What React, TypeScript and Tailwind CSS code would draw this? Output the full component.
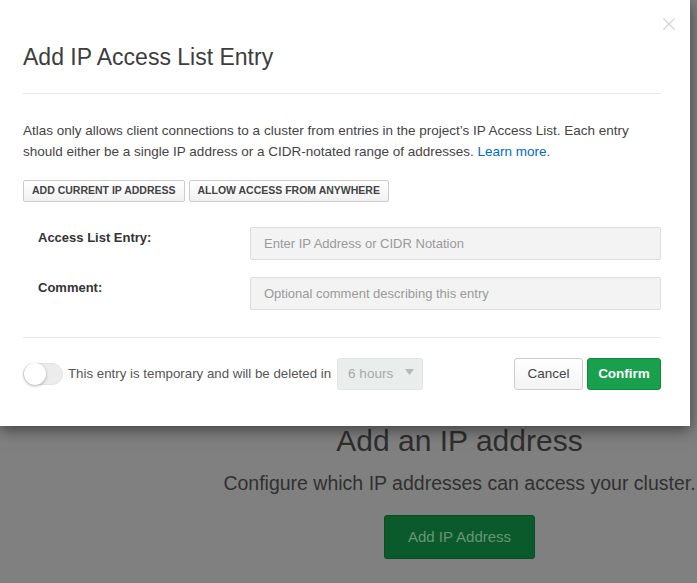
const font = { fontFamily: '"Liberation Sans", Arial, sans-serif' };

const Backdrop = () => (
  <div className="flex flex-col items-center w-[475px] ml-[222px] pt-[421px] text-center">
    <div className="text-[30px] font-light text-[#2e2e2e] leading-[40px] whitespace-nowrap">Add an IP address</div>
    <div className="mt-[10px] text-[19.5px] text-[#303030] leading-[24px] whitespace-nowrap">
      Configure which IP addresses can access your cluster.
    </div>
    <div className="mt-[20px] w-[151px] h-[44px] rounded-[3px] bg-[#0b5a2b] border border-[#0a4d25] flex items-center justify-center text-[15px] text-[#6a9479]">
      Add IP Address
    </div>
  </div>
);

export default function App() {
  return (
    <div className="relative w-[697px] h-[583px] overflow-hidden bg-[#808080]" style={font}>
      <Backdrop />

      {/* modal */}
      <div className="absolute left-0 top-0 w-[690px] h-[426px] bg-white shadow-[0_4px_14px_rgba(0,0,0,0.5)]">
        <svg width="12" height="12" viewBox="0 0 12 12" className="absolute left-[663px] top-[18px]">
          <path d="M0.5 0.5L11.5 11.5M11.5 0.5L0.5 11.5" stroke="#d4d4d4" strokeWidth="1.3" />
        </svg>

        <div className="px-[23px] w-[684px]">
          <h2 className="pt-[42px] pb-[21px] text-[23px] font-light text-[#3d3d3d] leading-[30px] border-b border-[#e8e8e8]">
            Add IP Access List Entry
          </h2>

          <p className="mt-[26px] text-[13.5px] leading-[21px] text-[#444]">
            Atlas only allows client connections to a cluster from entries in the project’s IP Access List. Each entry
            should either be a single IP address or a CIDR-notated range of addresses.{" "}
            <a className="text-[#006cbc]">Learn more.</a>
          </p>

          <div className="mt-[18px] flex gap-[4px]">
            <button className="h-[22px] px-[8px] text-[10.5px] font-bold text-[#444] uppercase border border-[#ccc] rounded-[2px] bg-gradient-to-b from-white to-[#f1f1f1]">
              Add current IP address
            </button>
            <button className="h-[22px] px-[8px] text-[10.5px] font-bold text-[#444] uppercase border border-[#ccc] rounded-[2px] bg-gradient-to-b from-white to-[#f1f1f1]">
              Allow access from anywhere
            </button>
          </div>

          <div className="mt-[25px] flex flex-col gap-[17px]">
            <div className="flex items-start">
              <label className="w-[227px] pl-[15px] pt-[1px] text-[13px] font-bold text-[#333]">Access List Entry:</label>
              <input
                placeholder="Enter IP Address or CIDR Notation"
                className="flex-1 h-[33px] px-[13px] bg-[#f3f3f3] border border-[#ddd] rounded-[2px] text-[13px] placeholder:text-[#9a9a9a] outline-none"
              />
            </div>
            <div className="flex items-start">
              <label className="w-[227px] pl-[15px] pt-[1px] text-[13px] font-bold text-[#333]">Comment:</label>
              <input
                placeholder="Optional comment describing this entry"
                className="flex-1 h-[33px] px-[13px] bg-[#f3f3f3] border border-[#ddd] rounded-[2px] text-[13px] placeholder:text-[#9a9a9a] outline-none"
              />
            </div>
          </div>

          <div className="mt-[27px] border-t border-[#e8e8e8] pt-[20px] flex items-center">
            <div className="w-[40px] h-[22px] rounded-full bg-[#ececec] border border-[#e2e2e2] relative">
              <div className="absolute left-0 top-[-1px] w-[22px] h-[22px] rounded-full bg-white shadow-[0_1px_3px_rgba(0,0,0,0.3)]" />
            </div>
            <span className="ml-[5px] text-[13.3px] text-[#555]">This entry is temporary and will be deleted in</span>
            <div className="ml-[6px] w-[86px] h-[32px] bg-[#e9eeed] border border-[#dfe5e4] rounded-[3px] flex items-center pl-[10px] pr-[8px] text-[13.5px] text-[#a6aaa9]">
              <span className="flex-1">6 hours</span>
              <svg width="9" height="6" viewBox="0 0 9 6" className="mb-[4px]">
                <path d="M0 0h9L4.5 6z" fill="#b5b9b8" />
              </svg>
            </div>
            <div className="flex-1" />
            <button className="h-[32px] w-[69px] text-[13.5px] text-[#444] border border-[#ccc] rounded-[3px] bg-gradient-to-b from-white to-[#f3f3f3]">
              Cancel
            </button>
            <button className="ml-[4px] h-[32px] w-[74px] text-[13.5px] font-bold text-white border border-[#10893f] rounded-[3px] bg-[#18a04d]">
              Confirm
            </button>
          </div>
        </div>
      </div>
    </div>
  );
}
